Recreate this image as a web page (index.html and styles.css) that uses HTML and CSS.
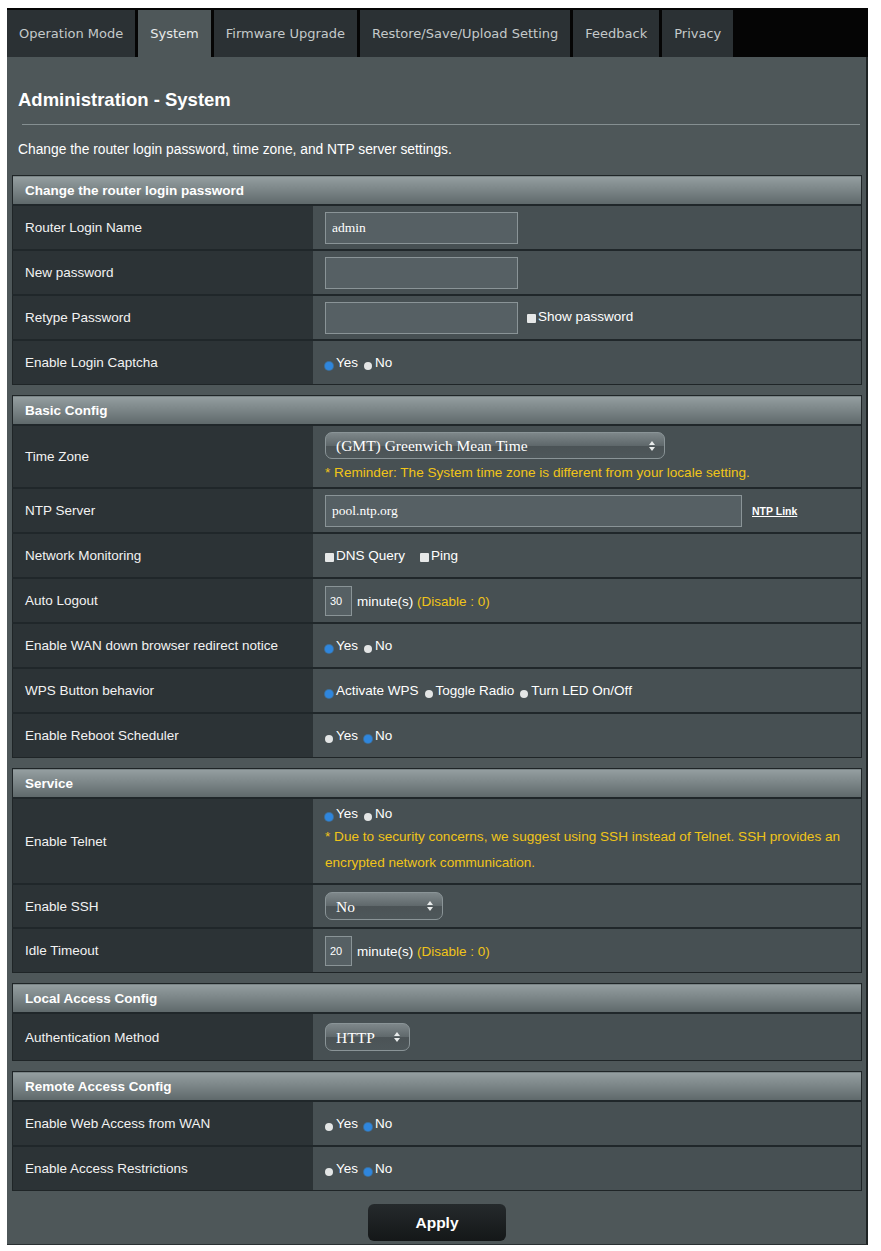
FILE: index.html
```html
<!DOCTYPE html>
<html lang="en">
<head>
    <meta charset="UTF-8">
    <link rel="stylesheet" href="styles.css">
</head>
<body>
<div class="page">
    <div class="tab-bar">
        <div class="tab">Operation Mode</div>
        <div class="tab active">System</div>
        <div class="tab">Firmware Upgrade</div>
        <div class="tab">Restore/Save/Upload Setting</div>
        <div class="tab">Feedback</div>
        <div class="tab">Privacy</div>
    </div>
    <div class="panel">
        <h1 class="panel-title">Administration - System</h1>
        <div class="title-line"></div>
        <p class="panel-desc">Change the router login password, time zone, and NTP server settings.</p>

        <table class="form-table">
            <thead><tr><td colspan="2">Change the router login password</td></tr></thead>
            <tbody>
            <tr>
                <th>Router Login Name</th>
                <td><input class="text-input" type="text" value="admin"></td>
            </tr>
            <tr>
                <th>New password</th>
                <td><input class="text-input" type="password"></td>
            </tr>
            <tr>
                <th>Retype Password</th>
                <td><input class="text-input" type="password"><label class="check-opt"><input type="checkbox">Show password</label></td>
            </tr>
            <tr>
                <th>Enable Login Captcha</th>
                <td><label class="radio-opt"><input type="radio" name="captcha" checked>Yes</label><label class="radio-opt"><input type="radio" name="captcha">No</label></td>
            </tr>
            </tbody>
        </table>

        <table class="form-table">
            <thead><tr><td colspan="2">Basic Config</td></tr></thead>
            <tbody>
            <tr class="row-timezone">
                <th>Time Zone</th>
                <td>
                    <div class="select-wrap tz-select">
                        <select class="select-box"><option>(GMT) Greenwich Mean Time</option></select>
                        <svg class="select-arrows" width="6" height="10" viewBox="0 0 6 10"><path d="M3 0 L6 4 L0 4 Z M3 10 L6 6 L0 6 Z" fill="#e9ecec"/></svg>
                    </div>
                    <div class="hint">* Reminder: The System time zone is different from your locale setting.</div>
                </td>
            </tr>
            <tr>
                <th>NTP Server</th>
                <td><input class="text-input ntp-input" type="text" value="pool.ntp.org"><a class="ntp-link" href="#">NTP Link</a></td>
            </tr>
            <tr>
                <th>Network Monitoring</th>
                <td><label class="check-opt"><input type="checkbox">DNS Query</label><label class="check-opt"><input type="checkbox">Ping</label></td>
            </tr>
            <tr>
                <th>Auto Logout</th>
                <td><input class="num-input" type="text" value="30"><span class="unit">minute(s)</span> <span class="hint-inline">(Disable : 0)</span></td>
            </tr>
            <tr>
                <th>Enable WAN down browser redirect notice</th>
                <td><label class="radio-opt"><input type="radio" name="wandown" checked>Yes</label><label class="radio-opt"><input type="radio" name="wandown">No</label></td>
            </tr>
            <tr>
                <th>WPS Button behavior</th>
                <td><label class="radio-opt"><input type="radio" name="wps" checked>Activate WPS</label><label class="radio-opt"><input type="radio" name="wps">Toggle Radio</label><label class="radio-opt"><input type="radio" name="wps">Turn LED On/Off</label></td>
            </tr>
            <tr>
                <th>Enable Reboot Scheduler</th>
                <td><label class="radio-opt"><input type="radio" name="reboot">Yes</label><label class="radio-opt"><input type="radio" name="reboot" checked>No</label></td>
            </tr>
            </tbody>
        </table>

        <table class="form-table">
            <thead><tr><td colspan="2">Service</td></tr></thead>
            <tbody>
            <tr class="row-telnet">
                <th>Enable Telnet</th>
                <td>
                    <label class="radio-opt"><input type="radio" name="telnet" checked>Yes</label><label class="radio-opt"><input type="radio" name="telnet">No</label>
                    <div class="hint hint-wide">* Due to security concerns, we suggest using SSH instead of Telnet. SSH provides an encrypted network communication.</div>
                </td>
            </tr>
            <tr class="row-ssh">
                <th>Enable SSH</th>
                <td>
                    <div class="select-wrap ssh-select">
                        <select class="select-box"><option>No</option></select>
                        <svg class="select-arrows" width="6" height="10" viewBox="0 0 6 10"><path d="M3 0 L6 4 L0 4 Z M3 10 L6 6 L0 6 Z" fill="#e9ecec"/></svg>
                    </div>
                </td>
            </tr>
            <tr>
                <th>Idle Timeout</th>
                <td><input class="num-input" type="text" value="20"><span class="unit">minute(s)</span> <span class="hint-inline">(Disable : 0)</span></td>
            </tr>
            </tbody>
        </table>

        <table class="form-table">
            <thead><tr><td colspan="2">Local Access Config</td></tr></thead>
            <tbody>
            <tr class="row-auth">
                <th>Authentication Method</th>
                <td>
                    <div class="select-wrap auth-select">
                        <select class="select-box"><option>HTTP</option></select>
                        <svg class="select-arrows" width="6" height="10" viewBox="0 0 6 10"><path d="M3 0 L6 4 L0 4 Z M3 10 L6 6 L0 6 Z" fill="#e9ecec"/></svg>
                    </div>
                </td>
            </tr>
            </tbody>
        </table>

        <table class="form-table">
            <thead><tr><td colspan="2">Remote Access Config</td></tr></thead>
            <tbody>
            <tr>
                <th>Enable Web Access from WAN</th>
                <td><label class="radio-opt"><input type="radio" name="wanaccess">Yes</label><label class="radio-opt"><input type="radio" name="wanaccess" checked>No</label></td>
            </tr>
            <tr>
                <th>Enable Access Restrictions</th>
                <td><label class="radio-opt"><input type="radio" name="restrict">Yes</label><label class="radio-opt"><input type="radio" name="restrict" checked>No</label></td>
            </tr>
            </tbody>
        </table>

        <div class="apply-row">
            <button class="apply-btn">Apply</button>
        </div>
    </div>
</div>
</body>
</html>
```

FILE: styles.css
```css
body {
    margin: 0;
    background-color: #ffffff;
    font-family: "Liberation Sans", Arial, sans-serif;
}

.page {
    width: 861px;
    margin: 8px 0 0 7px;
}

/* top tab strip */
.tab-bar {
    display: flex;
    gap: 3px;
    height: 49px;
    padding-top: 2px;
    box-sizing: border-box;
    background-color: #050505;
}

.tab {
    padding: 0 12px;
    background-color: #2b3134;
    color: #c4c9ca;
    font-family: "DejaVu Sans", sans-serif;
    font-size: 13px;
    line-height: 47px;
}

.tab.active {
    background-color: #4e5759;
    color: #e8ebeb;
}

/* main panel */
.panel {
    background-color: #4e5759;
    border-right: 2px solid #1e2324;
    border-bottom: 1px solid #2a3032;
    padding: 0 4px 3px 5px;
}

.panel-title {
    margin: 0;
    padding: 33px 0 0 6px;
    font-size: 18.5px;
    line-height: 20px;
    font-weight: bold;
    color: #ffffff;
}

.title-line {
    height: 1px;
    margin: 14px 2px 0 10px;
    background-color: #858f91;
}

.panel-desc {
    margin: 17px 0 17px 6px;
    font-size: 13.8px;
    line-height: 16px;
    color: #ffffff;
}

/* settings tables */
.form-table {
    width: 100%;
    border-collapse: collapse;
    margin-bottom: 10px;
    border: 1px solid #1f2527;
}

.form-table thead td {
    height: 28px;
    padding: 0 12px;
    background: linear-gradient(#959fa1, #5e686a);
    color: #ffffff;
    font-size: 13.5px;
    font-weight: bold;
}

.form-table th {
    width: 276px;
    height: 43px;
    padding: 0 12px;
    background-color: #2c3336;
    border-top: 2px solid #20272a;
    color: #f2f2f2;
    font-size: 13.5px;
    font-weight: normal;
    text-align: left;
}

.form-table tbody td {
    padding: 0 12px;
    background-color: #475053;
    border-top: 2px solid #20272a;
    color: #ffffff;
    font-size: 13.5px;
}

.row-timezone th, .row-timezone td {
    height: 61px;
}

.row-telnet th, .row-telnet td {
    height: 84px;
}

.row-ssh th, .row-ssh td {
    height: 42px;
}

.row-auth th, .row-auth td {
    height: 46px;
}

.text-input {
    width: 193px;
    height: 32px;
    box-sizing: border-box;
    margin: 0;
    padding: 0 6px;
    vertical-align: middle;
    background-color: #566064;
    border: 1px solid #8a9497;
    color: #ffffff;
    font-family: "Liberation Serif", serif;
    font-size: 13.5px;
}

.ntp-input {
    width: 417px;
}

.ntp-link {
    margin-left: 10px;
    color: #ffffff;
    font-size: 10.5px;
    font-weight: bold;
    text-decoration: underline;
    vertical-align: middle;
}

.num-input {
    width: 27px;
    height: 30px;
    box-sizing: border-box;
    margin: 0 5px 0 0;
    padding: 0 4px;
    vertical-align: middle;
    background-color: #566064;
    border: 1px solid #8a9497;
    color: #ffffff;
    font-family: "Liberation Sans", Arial, sans-serif;
    font-size: 11px;
}

.unit {
    vertical-align: middle;
}

.hint-inline {
    color: #f0c419;
    vertical-align: middle;
}

.hint {
    margin-top: 5px;
    color: #f0c419;
    font-size: 13.6px;
    line-height: 17px;
}

.hint-wide {
    margin-top: 3px;
    line-height: 26px;
}

/* radio + checkbox */
.radio-opt, .check-opt {
    margin-right: 6px;
    color: #ffffff;
    font-size: 13.5px;
}

.check-opt {
    margin-left: 9px;
}

.check-opt:first-child {
    margin-left: 0;
}

.radio-opt input {
    -webkit-appearance: none;
    appearance: none;
    width: 8px;
    height: 8px;
    margin: 0 3px 0 0;
    border-radius: 50%;
    background-color: #e3e5e5;
    vertical-align: -3px;
}

.radio-opt input:checked {
    background-color: #2f86dd;
    box-shadow: 0 0 0 1px #3c6f9c;
}

.check-opt input {
    -webkit-appearance: none;
    appearance: none;
    width: 9px;
    height: 9px;
    margin: 0 2px 0 0;
    border-radius: 1px;
    background-color: #e6e8e8;
    vertical-align: -2px;
}

/* select boxes */
.select-wrap {
    position: relative;
    display: inline-block;
    vertical-align: middle;
}

.select-box {
    -webkit-appearance: none;
    appearance: none;
    height: 27px;
    margin: 0;
    padding: 0 10px;
    border: 1px solid #8a9497;
    border-radius: 7px;
    background: linear-gradient(#7e878a, #5f686b 50%, #4b5356 52%, #4e575a);
    color: #ffffff;
    font-family: "Liberation Serif", serif;
    font-size: 15.5px;
}

.tz-select .select-box {
    width: 340px;
}

.ssh-select .select-box {
    width: 118px;
    height: 28px;
}

.auth-select .select-box {
    width: 85px;
    height: 28px;
}

.select-arrows {
    position: absolute;
    right: 10px;
    top: 9px;
}

/* bottom button */
.apply-row {
    padding-top: 3px;
    text-align: center;
}

.apply-btn {
    width: 138px;
    height: 37px;
    border: none;
    border-radius: 6px;
    background: linear-gradient(#252a2c, #141718);
    color: #ffffff;
    font-family: "Liberation Sans", Arial, sans-serif;
    font-size: 15.5px;
    font-weight: bold;
}
```
